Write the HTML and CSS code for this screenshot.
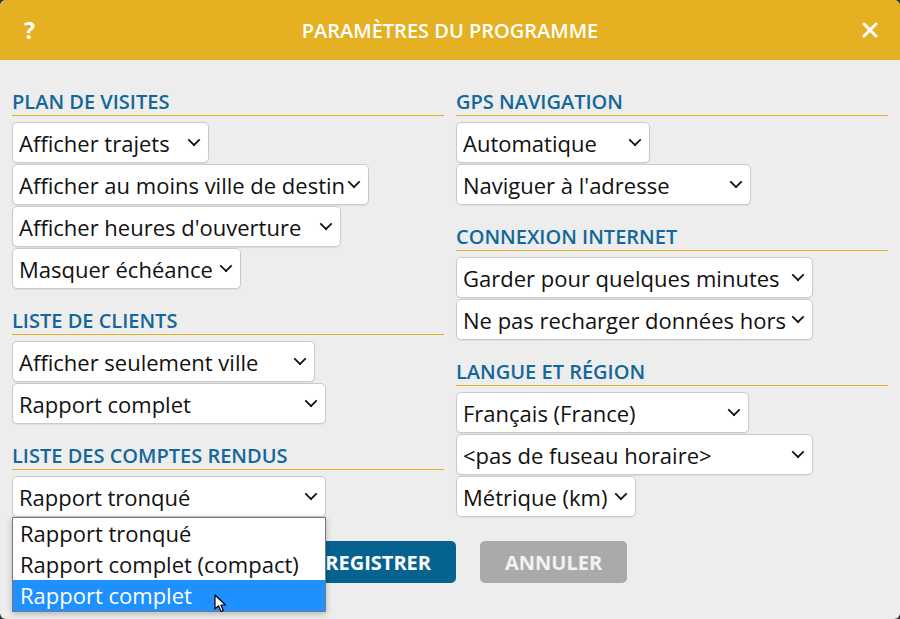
FILE: index.html
```html
<!DOCTYPE html>
<html lang="fr">

<head>
    <meta charset="UTF-8">
    <meta name="viewport" content="width=device-width, initial-scale=1.0">
    <title>Paramètres du programme</title>
    <link rel="stylesheet" href="styles.css">
</head>

<body>

    <div class="dialog">
        <!-- Title bar -->
        <header class="dialog-header">
            <span class="help">?</span>
            <h1>Paramètres du programme</h1>
            <span class="close">
                <svg width="16" height="16" viewBox="0 0 16 16">
                    <path d="M2 2 L14 14 M14 2 L2 14" stroke="#fff" stroke-width="3" stroke-linecap="round" fill="none"/>
                </svg>
            </span>
        </header>

        <div class="dialog-body">
            <div class="columns">

                <!-- Left column -->
                <div class="col">
                    <section class="section">
                        <h2>Plan de visites</h2>
                        <div class="select w-197"><span>Afficher trajets</span><i class="chev"></i></div>
                        <div class="select w-357"><span>Afficher au moins ville de destination</span><i class="chev"></i></div>
                        <div class="select w-329"><span>Afficher heures d'ouverture</span><i class="chev"></i></div>
                        <div class="select w-229"><span>Masquer échéance</span><i class="chev"></i></div>
                    </section>

                    <section class="section">
                        <h2>Liste de clients</h2>
                        <div class="select w-303"><span>Afficher seulement ville</span><i class="chev"></i></div>
                        <div class="select w-314"><span>Rapport complet</span><i class="chev"></i></div>
                    </section>

                    <section class="section">
                        <h2>Liste des comptes rendus</h2>
                        <div class="select w-314 open">
                            <span>Rapport tronqué</span><i class="chev"></i>
                            <!-- open list -->
                            <ul class="dropdown">
                                <li>Rapport tronqué</li>
                                <li>Rapport complet (compact)</li>
                                <li class="active">Rapport complet</li>
                            </ul>
                            <svg class="cursor" width="14" height="20" viewBox="0 0 14 20">
                                <path d="M1 1 L1 15 L4.5 11.8 L7 17.5 L9.3 16.5 L6.9 11 L11.5 11 Z" fill="#fff" stroke="#000" stroke-width="1.2" stroke-linejoin="round"/>
                            </svg>
                        </div>
                    </section>
                </div>

                <!-- Right column -->
                <div class="col">
                    <section class="section">
                        <h2>GPS navigation</h2>
                        <div class="select w-194"><span>Automatique</span><i class="chev"></i></div>
                        <div class="select w-295"><span>Naviguer à l'adresse</span><i class="chev"></i></div>
                    </section>

                    <section class="section">
                        <h2>Connexion internet</h2>
                        <div class="select w-357"><span>Garder pour quelques minutes</span><i class="chev"></i></div>
                        <div class="select w-357"><span>Ne pas recharger données hors ligne</span><i class="chev"></i></div>
                    </section>

                    <section class="section">
                        <h2>Langue et région</h2>
                        <div class="select w-293"><span>Français (France)</span><i class="chev"></i></div>
                        <div class="select w-357"><span>&lt;pas de fuseau horaire&gt;</span><i class="chev"></i></div>
                        <div class="select w-180"><span>Métrique (km)</span><i class="chev"></i></div>
                    </section>
                </div>
            </div>

            <!-- Buttons -->
            <div class="actions">
                <button class="btn btn-save">Enregistrer</button>
                <button class="btn btn-cancel">Annuler</button>
            </div>
        </div>
    </div>

</body>

</html>
```

FILE: styles.css
```css
/* Settings dialog */
html, body {
    height: 100%;
}

body {
    margin: 0;
    background: #333;
    font-family: 'Open Sans', 'Noto Sans', sans-serif;
    color: #111;
}

.dialog {
    height: 100%;
    display: flex;
    flex-direction: column;
    background: #ededed;
    border-radius: 6px;
    overflow: hidden;
}

/* Title bar */
.dialog-header {
    height: 60px;
    flex-shrink: 0;
    background: #e5b021;
    color: #fff;
    display: flex;
    align-items: center;
    padding: 0 22px 0 24px;
}

.dialog-header h1 {
    flex: 1;
    margin: 0;
    text-align: center;
    font-size: 20px;
    font-weight: 600;
    text-transform: uppercase;
}

.help {
    font-size: 23px;
    font-weight: 700;
    width: 14px;
}

.close {
    display: flex;
    width: 16px;
}

/* Body */
.dialog-body {
    flex: 1;
    padding: 30px 12px 0;
}

.columns {
    display: grid;
    grid-template-columns: 1fr 1fr;
    column-gap: 12px;
}

.section + .section {
    margin-top: 20px;
}

h2 {
    margin: 0 0 6px;
    font-size: 20px;
    line-height: 24px;
    font-weight: 600;
    text-transform: uppercase;
    color: #13679a;
    padding-bottom: 1px;
    border-bottom: 1px solid #e5b021;
}

/* Fake select boxes */
.select {
    position: relative;
    box-sizing: border-box;
    height: 41px;
    margin-bottom: 1px;
    display: flex;
    align-items: center;
    padding: 0 6px;
    background: #fff;
    border: 1px solid #cacaca;
    border-radius: 5px;
    box-shadow: 0 1px 1px rgba(0, 0, 0, 0.06);
    font-size: 22px;
}

.select span {
    flex: 1;
    min-width: 0;
    white-space: nowrap;
    overflow: hidden;
}

.chev {
    flex-shrink: 0;
    width: 8px;
    height: 8px;
    margin: -5px 3px 0 4px;
    border-right: 2px solid #111;
    border-bottom: 2px solid #111;
    transform: rotate(45deg) scale(0.9);
}

.w-180 { width: 180px; }
.w-194 { width: 194px; }
.w-197 { width: 197px; }
.w-229 { width: 229px; }
.w-293 { width: 293px; }
.w-295 { width: 295px; }
.w-303 { width: 303px; }
.w-314 { width: 314px; }
.w-329 { width: 329px; }
.w-357 { width: 357px; }

/* Open list */
.dropdown {
    position: absolute;
    top: calc(100% + 1px);
    left: -1px;
    width: 314px;
    box-sizing: border-box;
    margin: 0;
    padding: 0;
    list-style: none;
    background: #fff;
    border: 1px solid #7a7a7a;
    box-shadow: 0 2px 6px rgba(0, 0, 0, 0.25);
    z-index: 5;
}

.dropdown li {
    height: 31px;
    line-height: 31px;
    padding: 0 7px;
    white-space: nowrap;
}

.dropdown li.active {
    background: #1e90ff;
    color: #fff;
}

.cursor {
    position: absolute;
    left: 201px;
    top: 117px;
    z-index: 6;
}

/* Buttons */
.actions {
    display: flex;
    justify-content: center;
    gap: 24px;
    margin-top: 23px;
}

.btn {
    height: 42px;
    padding: 0 25px;
    border: none;
    border-radius: 5px;
    font-family: inherit;
    font-size: 20px;
    font-weight: 700;
    text-transform: uppercase;
    color: #fff;
    cursor: pointer;
}

.btn-save {
    background: #06628f;
}

.btn-cancel {
    background: #aaa;
    color: #f2f2f2;
}
```
